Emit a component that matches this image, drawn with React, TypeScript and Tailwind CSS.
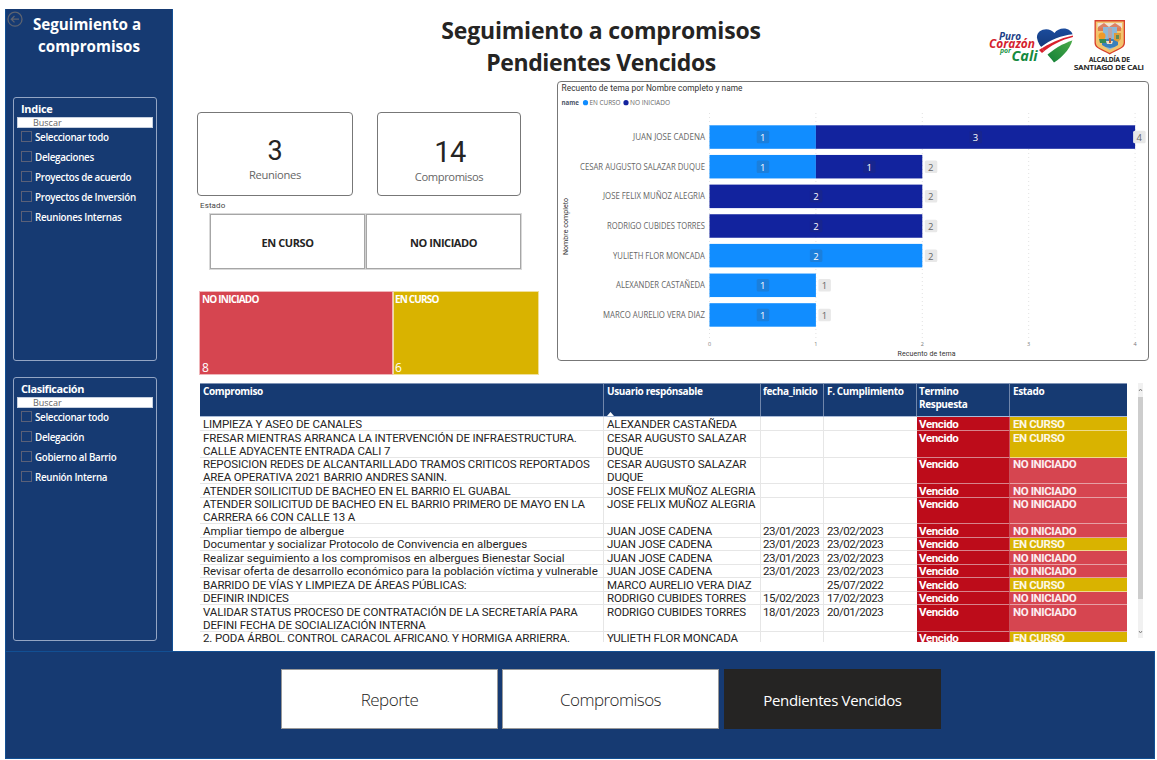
import React from "react";

const SEGOE = "font-['Open_Sans','Noto_Sans',sans-serif]";
const DIN = "font-['Roboto','Noto_Sans',sans-serif]";

type SlicerProps = { title: string; titleClass: string; items: string[] };

function Slicer({ title, titleClass, items }: SlicerProps) {
  return (
    <section className="h-[264px] w-[144px] rounded-[3px] border border-[#93a5c4] pl-[3px] pt-[4px]">
      <h2 className={`h-[15px] pl-[4px] text-[11px] font-bold leading-[14px] text-white whitespace-nowrap ${titleClass}`}>{title}</h2>
      <div className="h-[11px] w-[136px] border border-[#c5cfdf] bg-white pl-[15px] text-[9px] leading-[9px] text-[#666]">
        Buscar
      </div>
      <ul className="pt-[1px]">
        {items.map((label) => (
          <li key={label} className="flex h-5 items-start pl-[4px] pt-[2px]">
            <span className="h-[11px] w-[11px] shrink-0 border border-[#5a6078]" />
            <span className="pl-[3px] text-[9.8px] font-semibold leading-[14px] tracking-[-0.3px] text-white whitespace-nowrap">{label}</span>
          </li>
        ))}
      </ul>
    </section>
  );
}

function Logos() {
  return (
    <svg width="157" height="54" viewBox="0 0 157 54" className="shrink-0" fontFamily="Open Sans, Noto Sans, sans-serif">
      <defs>
        <linearGradient id="blue" x1="0" y1="0" x2="0" y2="1">
          <stop offset="0" stopColor="#1c4fa3" />
          <stop offset="1" stopColor="#153a7c" />
        </linearGradient>
        <linearGradient id="green" x1="1" y1="0" x2="0" y2="1">
          <stop offset="0" stopColor="#4fae4a" />
          <stop offset="1" stopColor="#0c7a35" />
        </linearGradient>
        <clipPath id="heart">
          <path d="M65 43.500 C61 37 49 28 48 19 C47 10 60 7 65.500 14 C70 7 83 8 84 17 C84 27 74 38 65 43.500 Z" />
        </clipPath>
      </defs>
      <path d="M50 31 C60 24 72 19 84 16.500 C72 21 61 27 53 34 Z" fill="#d9202c" />
      <g clipPath="url(#heart)">
        <rect x="46" y="8" width="40" height="38" fill="#fff" />
        <path d="M46 6 H86 V15 C74 16 62 20 52 28 L46 24 Z" fill="url(#blue)" />
        <path d="M50 31 C60 24 72 19 86 16 V17.500 C74 20 62 26 53 34 Z" fill="#d9202c" />
        <path d="M56 38 C65 29 75 24 86 20.500 V46 H58 Z" fill="url(#green)" />
      </g>
      <g fontStyle="italic" fontWeight="700">
        <text x="10" y="20.500" fontSize="10.500" fill="#1c3f86" textLength="22" lengthAdjust="spacingAndGlyphs">Puro</text>
        <text x="0" y="28.700" fontSize="11.500" fill="#d51f2f" textLength="46" lengthAdjust="spacingAndGlyphs">Corazón</text>
        <text x="11" y="34" fontSize="7.500" fill="#23974a" textLength="11" lengthAdjust="spacingAndGlyphs">por</text>
        <text x="22.500" y="41.700" fontSize="15" fill="#158a3e" textLength="26" lengthAdjust="spacingAndGlyphs">Cali</text>
      </g>
      <g>
        <path d="M105.5 1 H136 V24 C136 30 127 31 120.700 35.500 C114 31 105.500 30 105.500 24 Z" fill="#d8402c" />
        <path d="M106.800 2.500 H134.700 V23.500 C134.700 29 127 30 120.700 34 C114 30 106.800 29 106.800 23.500 Z" fill="#f3c46d" />
        <path d="M108.500 4 H133 V9 C127 8 124 11 120.700 11 C117 11 114 8 108.500 9 Z" fill="#f1e5d3" />
        <path d="M109 8 L115 4 L120 8 L126 4 L132 8 V12 H109 Z" fill="#d7694a" opacity="0.8" />
        <path d="M114 8 H128 V26 C125 29 123 29 120.700 31 C118 29 116 28 114 26 Z" fill="#8db8d8" />
        <path d="M113 22 Q120 17 129 22 V26 Q121 32 113 26 Z" fill="#3a80bb" />
        <circle cx="113" cy="17" r="3.500" fill="#f09a28" />
        <path d="M110 20 H117 V24 H111 Z" fill="#378b50" />
        <path d="M125 14 H132 V20 L129 23 L125 21 Z" fill="#dc9c3c" />
        <path d="M127 16 H130 V20 H127 Z" fill="#5f8a55" />
        <path d="M119 9 H123 V19 H119 Z" fill="#b9a4a8" />
        <path d="M117 22 H124 L123 25 H118 Z" fill="#f1ddbf" />
        <path d="M120 19 H122 V24 H120 Z" fill="#b75d3a" />
      </g>
      <g fontWeight="600" fill="#111" stroke="#111" strokeWidth="0.200">
        <text x="100" y="42.500" fontSize="6.600" textLength="41" lengthAdjust="spacingAndGlyphs">ALCALDÍA DE</text>
        <text x="85" y="50.500" fontSize="7.800" textLength="70" lengthAdjust="spacingAndGlyphs">SANTIAGO DE CALI</text>
      </g>
    </svg>
  );
}

const bars = [
  { name: "JUAN JOSE CADENA", w: 72, curso: 1, no: 3 },
  { name: "CESAR AUGUSTO SALAZAR DUQUE", w: 125, curso: 1, no: 1 },
  { name: "JOSE FELIX MUÑOZ ALEGRIA", w: 102, curso: 0, no: 2 },
  { name: "RODRIGO CUBIDES TORRES", w: 98, curso: 0, no: 2 },
  { name: "YULIETH FLOR MONCADA", w: 92, curso: 2, no: 0 },
  { name: "ALEXANDER CASTAÑEDA", w: 89, curso: 1, no: 0 },
  { name: "MARCO AURELIO VERA DIAZ", w: 102, curso: 1, no: 0 },
];

function ValueTag({ x, y, value, fill, color }: { x: number; y: number; value: number; fill: string; color: string }) {
  return (
    <g>
      <rect x={x - 6} y={y - 6.500} width="12.500" height="12.500" rx="1.500" fill={fill} />
      <text x={x} y={y + 3.700} fontSize="9.500" textAnchor="middle" fill={color}>{value}</text>
    </g>
  );
}

function BarChart() {
  const x0 = 151.500;
  const unit = 106.400;
  return (
    <svg width="590" height="278" viewBox="0 0 590 278" fontFamily="Open Sans, Noto Sans, sans-serif">
      <text x="3.500" y="9" fontSize="8.300" fill="#333" fontFamily="Roboto, sans-serif" textLength="181">Recuento de tema por Nombre completo y name</text>
      <text x="3.500" y="23" fontSize="6.700" fontWeight="700" fill="#4a5568" textLength="17.500" lengthAdjust="spacingAndGlyphs">name</text>
      <circle cx="27.500" cy="20.700" r="2.600" fill="#118dff" />
      <text x="31.500" y="23" fontSize="7.200" fill="#666" textLength="31" lengthAdjust="spacingAndGlyphs">EN CURSO</text>
      <circle cx="68" cy="20.700" r="2.600" fill="#12239e" />
      <text x="72" y="23" fontSize="7.200" fill="#666" textLength="40" lengthAdjust="spacingAndGlyphs">NO INICIADO</text>
      {[0, 1, 2, 3, 4].map((n) => (
        <g key={n}>
          <line x1={x0 + n * unit} x2={x0 + n * unit} y1="31" y2="257" stroke="#e2e2e2" strokeWidth="1" strokeDasharray="1 3" />
          <text x={x0 + n * unit} y="264" fontSize="5.500" textAnchor="middle" fill="#777">{n}</text>
        </g>
      ))}
      {bars.map((b, i) => {
        const top = 43.300 + i * 29.650;
        const mid = top + 12;
        const total = b.curso + b.no;
        return (
          <g key={b.name}>
            <text x={147 - b.w} y={mid + 2.700} fontSize="8.200" fill="#666" textLength={b.w} lengthAdjust="spacingAndGlyphs">{b.name}</text>
            {b.curso > 0 && <rect x={x0} y={top} width={b.curso * unit} height="23.500" fill="#118dff" />}
            {b.no > 0 && <rect x={x0 + b.curso * unit} y={top} width={b.no * unit} height="23.500" fill="#12239e" />}
            {b.curso > 0 && <ValueTag x={x0 + (b.curso * unit) / 2} y={mid} value={b.curso} fill="#1b7fdc" color="#fff" />}
            {b.no > 0 && <ValueTag x={x0 + (b.curso + b.no / 2) * unit} y={mid} value={b.no} fill="#17258f" color="#fff" />}
            <ValueTag x={x0 + total * unit + (total === 4 ? 4 : 8.500)} y={mid} value={total} fill="#e8e8e8" color="#666" />
          </g>
        );
      })}
      <text transform="translate(10 173) rotate(-90)" fontSize="7" fill="#333" fontFamily="Roboto, sans-serif" textLength="57">Nombre completo</text>
      <text x="339.500" y="273.500" fontSize="7" fill="#333" fontFamily="Roboto, sans-serif" textLength="58">Recuento de tema</text>
    </svg>
  );
}

type Row = { h: string; text: string[]; user: string[]; start?: string; due?: string; curso?: boolean; mixed?: boolean };

const H1 = "h-[14px] pt-px";
const H1S = "h-[13px]";
const H2 = "h-[27px] pt-px";
const H2S = "h-[26px]";

const rows: Row[] = [
  { h: H1, text: ["LIMPIEZA Y ASEO DE CANALES"], user: ["ALEXANDER CASTAÑEDA"], curso: true },
  { h: H2, text: ["FRESAR MIENTRAS ARRANCA LA INTERVENCIÓN DE INFRAESTRUCTURA.", "CALLE ADYACENTE ENTRADA CALI 7"], user: ["CESAR AUGUSTO SALAZAR", "DUQUE"], curso: true },
  { h: H2S, text: ["REPOSICION REDES DE ALCANTARILLADO TRAMOS CRITICOS REPORTADOS", "AREA OPERATIVA 2021 BARRIO ANDRES SANIN."], user: ["CESAR AUGUSTO SALAZAR", "DUQUE"] },
  { h: H1, text: ["ATENDER SOILICITUD DE BACHEO EN EL BARRIO EL GUABAL"], user: ["JOSE FELIX MUÑOZ ALEGRIA"] },
  { h: H2S, text: ["ATENDER SOILICITUD DE BACHEO EN EL BARRIO PRIMERO DE MAYO EN LA", "CARRERA 66 CON CALLE 13 A"], user: ["JOSE FELIX MUÑOZ ALEGRIA"] },
  { h: H1, text: ["Ampliar tiempo de albergue"], user: ["JUAN JOSE CADENA"], start: "23/01/2023", due: "23/02/2023", mixed: true },
  { h: H1S, text: ["Documentar y socializar Protocolo de Convivencia en albergues"], user: ["JUAN JOSE CADENA"], start: "23/01/2023", due: "23/02/2023", curso: true, mixed: true },
  { h: H1, text: ["Realizar seguimiento a los compromisos en albergues Bienestar Social"], user: ["JUAN JOSE CADENA"], start: "23/01/2023", due: "23/02/2023", mixed: true },
  { h: H1S, text: ["Revisar oferta de desarrollo económico para la población víctima y vulnerable"], user: ["JUAN JOSE CADENA"], start: "23/01/2023", due: "23/02/2023", mixed: true },
  { h: H1, text: ["BARRIDO DE VÍAS Y LIMPIEZA DE ÁREAS PÚBLICAS:"], user: ["MARCO AURELIO VERA DIAZ"], due: "25/07/2022", curso: true },
  { h: H1S, text: ["DEFINIR INDICES"], user: ["RODRIGO CUBIDES TORRES"], start: "15/02/2023", due: "17/02/2023" },
  { h: H2, text: ["VALIDAR STATUS PROCESO DE CONTRATACIÓN DE LA SECRETARÍA PARA", "DEFINI FECHA DE SOCIALIZACIÓN INTERNA"], user: ["RODRIGO CUBIDES TORRES"], start: "18/01/2023", due: "20/01/2023" },
  { h: H1S, text: ["2. PODA ÁRBOL, CONTROL CARACOL AFRICANO, Y HORMIGA ARRIERRA."], user: ["YULIETH FLOR MONCADA"], curso: true },
];

const COLS = "grid grid-cols-[404px_157px_63px_93px_93px_117px]";

function CommitmentsTable() {
  return (
    <div className="h-[259px] w-[927px] shrink-0 overflow-hidden">
      <div className={`${COLS} h-[34px] border-y border-t-[#7f93b5] border-b-[#a9bbd8] bg-[#163a72] text-[10px] font-bold leading-[13px] tracking-[-0.36px] text-white whitespace-nowrap`}>
        <div className="border-r border-[#7086ab] pl-[3px] pt-px">Compromiso</div>
        <div className="relative border-r border-[#7086ab] pl-[3px] pt-px">
          Usuario respónsable
          <svg className="absolute bottom-0 left-[3px]" width="7" height="4" viewBox="0 0 7 4"><path d="M0 4L3.500 0L7 4Z" fill="#fff" /></svg>
        </div>
        <div className="border-r border-[#7086ab] pl-[2px] pt-px">fecha_inicio</div>
        <div className="border-r border-[#7086ab] pl-[3px] pt-px">F. Cumplimiento</div>
        <div className="border-r border-[#7086ab] pl-[2px] pt-px">Termino<br />Respuesta</div>
        <div className="pl-[3px] pt-px">Estado</div>
      </div>
      <div className={`${DIN} text-[11.5px] leading-[13px] text-[#252423] whitespace-nowrap`}>
        {rows.map((r) => (
          <div key={r.text[0]} className={`${COLS} tracking-[-0.15px]`}>
            <div className={`border-b border-r border-[#e6e6e6] pl-[3px] ${r.h} ${r.mixed ? "tracking-[0px]" : "tracking-[-0.13px]"}`}>{r.text.map((t) => <p key={t}>{t}</p>)}</div>
            <div className={`border-b border-r border-[#e6e6e6] pl-[3px] ${r.h}`}>{r.user.map((t) => <p key={t}>{t}</p>)}</div>
            <div className={`border-b border-r border-[#e6e6e6] pl-[2px] tracking-[-0.5px] ${r.h}`}>{r.start}</div>
            <div className={`border-b border-[#e6e6e6] pl-[3px] tracking-[-0.5px] ${r.h}`}>{r.due}</div>
            <div className={`border-b border-r border-b-[#d7848c] border-r-[#c9515c] bg-[#bd0c1a] pl-[2px] font-bold tracking-[-0.35px] text-white ${r.h}`}>Vencido</div>
            <div className={`border-b pl-[3px] font-bold tracking-[-0.42px] ${r.h} ${r.curso ? "border-[#eedb8c] bg-[#d9b300] text-[#fdf8e6]" : "border-[#e6a0a5] bg-[#d64550] text-[#fceef0]"}`}>
              {r.curso ? "EN CURSO" : "NO INICIADO"}
            </div>
          </div>
        ))}
      </div>
    </div>
  );
}

export default function App() {
  return (
    <div className={`${SEGOE} flex h-[760px] w-[1157px] flex-col overflow-hidden bg-white pl-[5px] pt-[9px]`}>
      <div className="flex h-[642px]">
        <aside className="flex w-[168px] flex-col border-r border-l border-[#124f93] bg-[#163a72]">
          <div className="flex h-[88px]">
            <svg width="17" height="20" viewBox="0 0 17 20" className="shrink-0" fill="none" stroke="#5d6370" strokeWidth="1.300">
              <circle cx="9" cy="10.200" r="7" />
              <path d="M13 10.200H5.500M8.500 7L5.300 10.200L8.500 13.400" />
            </svg>
            <h1 className="w-[130px] pt-[4px] text-center text-[15.2px] font-bold leading-[22px] text-white">
              <span className="block pr-[2px]">Seguimiento a</span>
              <span className="block pl-[2px]">compromisos</span>
            </h1>
          </div>
          <div className="flex flex-col gap-4 pl-[7px]">
            <Slicer
              title="Indice"
              titleClass="tracking-[-0.3px]"
              items={["Seleccionar todo", "Delegaciones", "Proyectos de acuerdo", "Proyectos de Inversión", "Reuniones Internas"]}
            />
            <Slicer
              title="Clasificación"
              titleClass="tracking-[-0.45px]"
              items={["Seleccionar todo", "Delegación", "Gobierno al Barrio", "Reunión Interna"]}
            />
          </div>
        </aside>
        <main className="flex flex-col">
          <header className="flex h-[72px]">
            <h1 className="ml-[228px] w-[400px] pt-[5px] text-center text-[23px] font-bold leading-[32px] tracking-[-0.2px] text-[#252423]">
              Seguimiento a compromisos
              <br />
              <span className="tracking-[-0.4px]">Pendientes Vencidos</span>
            </h1>
            <div className="ml-[188px] pt-[10px]"><Logos /></div>
          </header>
          <div className="flex h-[302px]">
            <div className="ml-[24px] flex w-[342px] flex-col pt-[31px]">
              <div className="flex gap-[24px]">
                <div className="flex h-[84px] w-[156px] flex-col items-center rounded-[4px] border border-[#777] pt-[23px] text-[#252423]">
                  <span className={`${DIN} text-[27px] leading-[30px]`}>3</span>
                  <span className="text-[11.2px] leading-[18px] tracking-[-0.3px] text-[#666]">Reuniones</span>
                </div>
                <div className="flex h-[84px] w-[144px] flex-col items-center rounded-[4px] border border-[#777] pt-[23px] text-[#252423]">
                  <span className={`${DIN} pl-[2px] text-[29px] leading-[32px] tracking-[-0.5px]`}>14</span>
                  <span className="text-[11.2px] leading-[18px] tracking-[-0.4px] text-[#666]">Compromisos</span>
                </div>
              </div>
              <p className={`${DIN} pl-[3px] pt-[4px] text-[8px] leading-[12px] tracking-[0.1px] text-[#444]`}>Estado</p>
              <div className="ml-[12px] mt-[1px] flex h-[57px] w-[313px] gap-px self-start border border-[#d9d9d9] bg-[#d0d0d0] text-[11px] font-bold text-[#252423]">
                <div className="flex flex-1 items-center justify-center border border-[#a6a6a6] bg-white pt-[4px] tracking-[-0.4px]">EN CURSO</div>
                <div className="flex flex-1 items-center justify-center border border-[#a6a6a6] bg-white pt-[4px] tracking-[-0.45px]">NO INICIADO</div>
              </div>
              <div className="ml-[2px] mt-[21px] flex h-[84px] w-[340px] text-[10px] leading-[13px] text-white">
                <div className="flex w-[194px] flex-col justify-between border border-[#efb5b9] bg-[#d64550] pl-[2px] pt-[1px]">
                  <span className="font-bold tracking-[-0.8px]">NO INICIADO</span>
                  <span className="text-[12px]">8</span>
                </div>
                <div className="flex w-[146px] flex-col justify-between border border-[#f0e09a] bg-[#d9b300] pl-[1px] pt-[1px]">
                  <span className="font-bold tracking-[-0.85px]">EN CURSO</span>
                  <span className="text-[12px]">6</span>
                </div>
              </div>
            </div>
            <div className="ml-[18px] h-[280px] w-[592px] rounded-[4px] border border-[#777]">
              <BarChart />
            </div>
          </div>
          <div className="flex pl-[27px]">
            <CommitmentsTable />
            <div className="ml-[11px] flex h-[255px] w-[5px] flex-col justify-between bg-[#f1f1f1]">
              <svg width="5" height="14" viewBox="0 0 5 14" fill="none" stroke="#777" strokeWidth="0.900"><path d="M1 8L2.500 6L4 8" /></svg>
              <div className="h-[202px] w-[5px] bg-[#cdcdcd]" />
              <div className="h-[26px]" />
              <svg width="5" height="12" viewBox="0 0 5 12" fill="none" stroke="#777" strokeWidth="0.900"><path d="M1 5L2.500 7L4 5" /></svg>
            </div>
          </div>
        </main>
      </div>
      <footer className="flex h-[108px] w-[1150px] border border-[#124f93] bg-[#163a72] pl-[275px] pt-[17px] text-[#252423]">
        <div className="flex h-[60px] w-[217px] items-center justify-center border border-[#999] bg-white pt-[2px] text-[17px] font-[350] tracking-[-0.5px]">Reporte</div>
        <div className="ml-[4px] flex h-[60px] w-[217px] items-center justify-center border border-[#999] bg-white pt-[2px] text-[17px] font-[350] tracking-[-0.55px]">Compromisos</div>
        <div className="ml-[5px] flex h-[60px] w-[217px] items-center justify-center bg-[#252423] pt-[2px] text-[15px] tracking-[-0.35px] text-white">Pendientes Vencidos</div>
      </footer>
    </div>
  );
}
